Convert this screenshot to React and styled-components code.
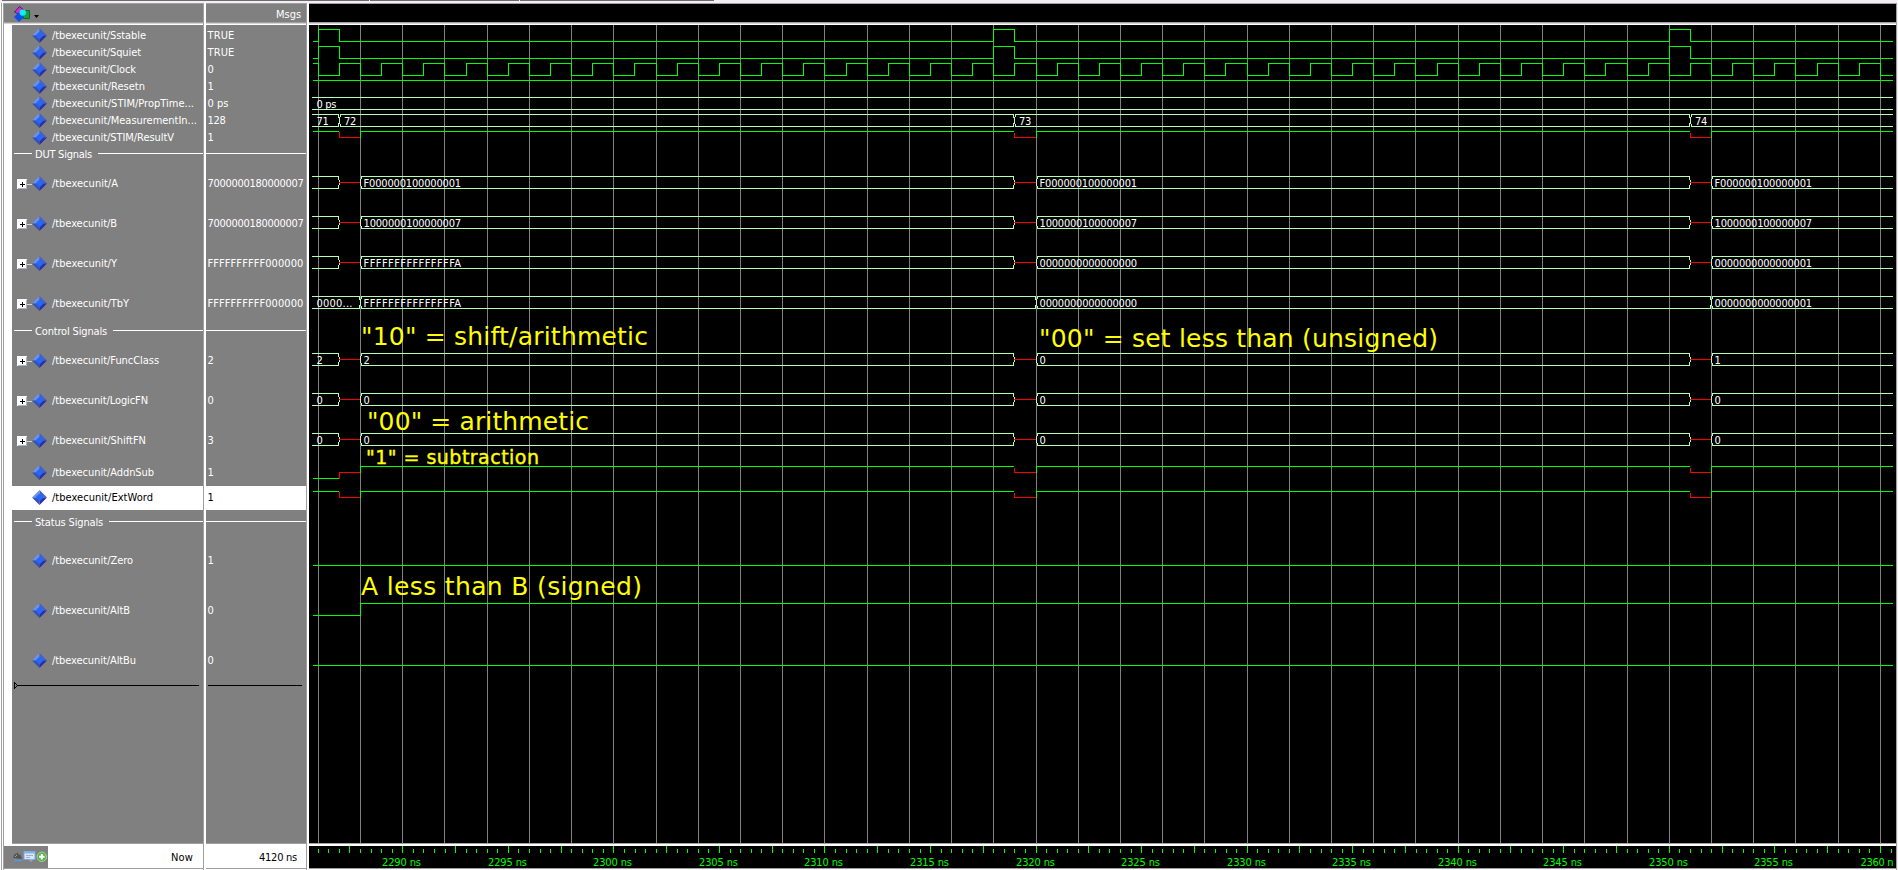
import React, { useLayoutEffect, useRef } from "react";
import styled, { createGlobalStyle } from "styled-components";

const UI_FONT = '"DejaVu Sans Condensed", "DejaVu Sans", sans-serif';
const GREEN = "#00ff00";
const BUS = "#b4ffb4";
const RED = "#ff0000";

const GlobalStyle = createGlobalStyle`
  * { box-sizing: border-box; }
  body { margin: 0; background: #fff; overflow: hidden; }
`;

const Window = styled.div`
  width: 1898px;
  height: 870px;
  display: flex;
  flex-direction: column;
  background: #fff;
  font: 11px/13px ${UI_FONT};
  color: #fff;
  overflow: hidden;
`;

const TopStrip = styled.div`
  height: 3px;
  flex: none;
  display: flex;
  gap: 1px;
  padding-left: 2px;
  background: #f1eff1;
`;

const StripSegment = styled.div`
  width: ${(p) => p.$width}px;
  height: 1px;
  background: #6e696e;
`;

const Workspace = styled.div`
  flex: 1;
  display: grid;
  grid-template-columns: 203px 103px 1587px 2px;
  margin-left: 1px;
  padding-left: 1px;
  border-left: 1px solid #a0a0a0;
`;

const Pane = styled.section`
  display: grid;
  grid-template-rows: 21px 821px 23px;
  min-width: 0;
  border-top: 1px solid #a0a0a0;
  border-left: ${(p) => (p.$first ? "1px solid #a0a0a0" : "0")};
  border-right: ${(p) => (p.$edge ? "0" : "1px solid #a0a0a0")};
  margin-right: ${(p) => (p.$edge ? "0" : "2px")};
`;

const PaneHead = styled.header`
  height: 21px;
  border-bottom: 1px solid #fff;
  box-shadow: inset 0 -1px #d4d4d4, inset 0 -2px #a0a0a0;
  background: ${(p) => (p.$dark ? "#000" : "#808080")};
  display: flex;
  align-items: center;
  justify-content: ${(p) => (p.$end ? "flex-end" : "flex-start")};
  padding: 0 ${(p) => (p.$end ? 5 : 0)}px 0 ${(p) => (p.$end || p.$dark ? 0 : 9)}px;
`;

const PaneBody = styled.div`
  height: 819px;
  background: ${(p) => (p.$dark ? "#000" : "#808080")};
  border-bottom: 1px solid #a0a0a0;
  padding-top: ${(p) => (p.$dark ? 0 : 2)}px;
  margin-left: ${(p) => (p.$gutter ? 8 : 0)}px;
`;

const PaneFoot = styled.footer`
  height: 23px;
  display: flex;
  align-items: center;
  justify-content: flex-end;
  padding-right: ${(p) => p.$pad || 0}px;
  color: #000;
  background: ${(p) => (p.$dark ? "#000" : "#fff")};
  border-bottom: 1px solid #a0a0a0;
`;

const FootTools = styled.div`
  width: 44px;
  height: 22px;
  margin-right: auto;
  background: #808080;
`;

const RightEdge = styled.div`
  border-left: 1px solid #a0a0a0;
  background: #f1eff1;
`;

const Row = styled.div`
  height: ${(p) => p.$height}px;
  display: flex;
  align-items: center;
  padding: ${(p) => (p.$height >= 40 ? 1 : 0)}px 0 ${(p) => (p.$selected ? 1 : 0)}px ${(p) => p.$indent || 0}px;
  border-top: ${(p) => (p.$selected ? "1px solid #808080" : "0")};
  color: ${(p) => (p.$selected ? "#000" : "#fff")};
  background: ${(p) => (p.$selected ? "#fff" : "transparent")};
`;

const Divider = styled.div`
  height: ${(p) => p.$height}px;
  display: flex;
  align-items: center;
  padding: 0 0 1px ${(p) => (p.$plain ? 0 : 2)}px;
`;

const Rule = styled.div`
  height: 1px;
  margin-bottom: 1px;
  background: #fff;
  flex: ${(p) => (p.$width ? `0 0 ${p.$width}px` : "1")};
`;

const DividerText = styled.span`
  padding: 1px 6px 0 3px;
`;

const Expander = styled.span`
  width: 15px;
  height: 13px;
  flex: none;
  padding-top: 2px;
  overflow: hidden;
  svg { display: block; }
`;

const NameText = styled.span`
  margin-left: 5px;
`;

const Fitted = styled.span`
  display: inline-block;
  white-space: pre;
`;

const EndMark = styled.div`
  height: 7px;
  margin: -3px 0 0 2px;
  svg { display: block; }
`;

/* Text tracked so that its advance equals the given width. */
function Fit({ width, children }) {
  const ref = useRef(null);
  useLayoutEffect(() => {
    const el = ref.current;
    el.style.letterSpacing = "0px";
    const natural = el.getBoundingClientRect().width;
    el.style.letterSpacing = `${(width - natural) / children.length}px`;
  }, [width, children]);
  return <Fitted ref={ref}>{children}</Fitted>;
}

const signals = [
  { name: "Sstable", w: 94, value: "TRUE", vw: 27, h: 17 },
  { name: "Squiet", w: 89, value: "TRUE", vw: 27, h: 17 },
  { name: "Clock", w: 84, value: "0", vw: 6, h: 17 },
  { name: "Resetn", w: 93, value: "1", vw: 6, h: 17 },
  { name: "STIM/PropTime...", w: 142, value: "0 ps", vw: 21, h: 17 },
  { name: "MeasurementIn...", w: 145, value: "128", vw: 18, h: 17 },
  { name: "STIM/ResultV", w: 122, value: "1", vw: 6, h: 17 },
  { divider: "DUT Signals", w: 57, h: 17 },
  { name: "A", w: 66, value: "7000000180000007", vw: 96, h: 40, bus: true },
  { name: "B", w: 65, value: "7000000180000007", vw: 96, h: 40, bus: true },
  { name: "Y", w: 65, value: "FFFFFFFFFF000000", vw: 96, h: 40, bus: true },
  { name: "TbY", w: 77, value: "FFFFFFFFFF000000", vw: 96, h: 40, bus: true },
  { divider: "Control Signals", w: 72, h: 17 },
  { name: "FuncClass", w: 107, value: "2", vw: 6, h: 40, bus: true },
  { name: "LogicFN", w: 96, value: "0", vw: 6, h: 40, bus: true },
  { name: "ShiftFN", w: 94, value: "3", vw: 6, h: 40, bus: true },
  { name: "AddnSub", w: 102, value: "1", vw: 6, h: 25 },
  { name: "ExtWord", w: 101, value: "1", vw: 6, h: 25, selected: true },
  { divider: "Status Signals", w: 68, h: 25 },
  { name: "Zero", w: 81, value: "1", vw: 6, h: 50 },
  { name: "AltB", w: 78, value: "0", vw: 6, h: 50 },
  { name: "AltBu", w: 84, value: "0", vw: 6, h: 50 },
];

const Diamond = () => (
  <svg width="15" height="15" viewBox="0 0 15 15">
    <path d="M7.5 0L0 7.5h7.5z" fill="#6a92ec" />
    <path d="M7.5 0L15 7.5H7.5z" fill="#4560c8" />
    <path d="M0 7.5h7.5V15z" fill="#3450b4" />
    <path d="M15 7.5H7.5V15z" fill="#2c2ca4" />
    <path d="M7.5 3.5l4 4-4 4-4-4z" fill="#2468fa" />
  </svg>
);

const PlusBox = () => (
  <svg width="16" height="11" viewBox="0 0 16 11" shapeRendering="crispEdges">
    <rect x="0" y="0" width="10" height="10" fill="#fff" />
    <path d="M9.5 1v9M1 9.5h9" stroke="#a9b4cc" />
    <path d="M3 5.5h5M5.5 3v5" stroke="#000" />
    <path d="M10 5.5h6" stroke="#d4d4d4" />
  </svg>
);

const ObjectsIcon = () => (
  <svg width="26" height="18" viewBox="13 5 26 18">
    <path d="M14.5 12l5-5.5 5 4-3 5z" fill="#c832dc" stroke="#3c0a46" strokeWidth="0.8" />
    <path d="M23 10.500h6.500v8H23z" fill="#14a03c" stroke="#0a5a28" strokeWidth="0.8" />
    <path d="M19 12l5 5-5 5-5-5z" fill="#0a50e6" />
    <circle cx="22.800" cy="12.600" r="3.200" fill="#14ebfa" />
    <path d="M34 15h5l-2.500 3z" fill="#000" />
  </svg>
);

const FootIcons = () => (
  <svg width="44" height="22" viewBox="4 846 44 22">
    <path d="M13 858l2-5 1 2 1-3 2 3 1-1 2 5z" fill="#505459" />
    <path d="M14 860.500h8" stroke="#5a96e1" strokeWidth="1.500" />
    <path d="M15 857l2-2" stroke="#a0a4a8" />
    <rect x="24" y="851.500" width="11" height="8" fill="#dce6f5" stroke="#7da5dc" />
    <path d="M24 852.500h11" stroke="#82b4f0" strokeWidth="2" />
    <path d="M26 855.500h7M26 857.500h4" stroke="#a0afc8" />
    <path d="M28 859l3 3 3-3z" fill="#82aae6" />
    <circle cx="41.800" cy="856.800" r="4.700" fill="#55b44b" stroke="#a0d796" />
    <path d="M39 856.800h5.600M41.800 854v5.600" stroke="#fff" strokeWidth="2" />
  </svg>
);

/* Time in ns to horizontal pixel. */
const tx = (t) => Math.floor(318.3 + (t - 2286) * 21.109);

const END = 1893;
const range = (from, to, step) => {
  const out = [];
  for (let v = from; v <= to + 1e-6; v += step) out.push(v);
  return out;
};

const pulse = (high, low) => {
  let d = `M313 ${low + 0.5}`;
  [2286, 2318, 2350].forEach((t) => {
    d += `H${tx(t) + 0.5}V${high + 0.5}H${tx(t + 1) + 0.5}V${low + 0.5}`;
  });
  return d + `H${END}`;
};

const clockPath = () => {
  let d = "M313 63.5";
  range(2286, 2360, 2).forEach((t) => {
    d += `H${tx(t) + 0.5}V75.5`;
    if (t < 2360) d += `H${tx(t + 1) + 0.5}V63.5`;
  });
  return d + `H${END}`;
};

const Line = ({ d, color = GREEN }) => <path d={d} fill="none" stroke={color} />;

const BusText = ({ x, top, children, width }) => (
  <text x={x} y={top + 11} fill="#fff" textLength={width || children.length * 6.09}>
    {children}
  </text>
);

const busEnd = (x, y) =>
  `M${x - 0.5} ${y}v4M${x + 0.5} ${y + 4}v2M${x + 0.5} ${y + 7}v2M${x - 0.5} ${y + 9}v4`;
const busStart = (x, y) =>
  `M${x + 1.5} ${y}v3M${x + 0.5} ${y + 3}v7M${x + 1.5} ${y + 10}v3`;

function Bus({ top, segments }) {
  return (
    <g>
      {segments.map(([from, to, label, width], i) => {
        const a = from ? tx(from) : 311;
        const b = to ? tx(to) : END;
        let d = `M${a + 1} ${top + 0.5}H${b}M${a + 1} ${top + 12.5}H${b}`;
        if (from) d += busStart(a, top);
        if (to) d += busEnd(b, top);
        const textX = from ? a + (from % 2 ? 5 : 3.6) : 316.5;
        return (
          <g key={i}>
            <Line d={d} color={BUS} />
            {label && (
              <BusText x={textX} top={top} width={width}>
                {label}
              </BusText>
            )}
          </g>
        );
      })}
    </g>
  );
}

const gaps = [2287, 2319, 2351];

const UnknownBus = ({ top, labels }) => (
  <g>
    <Line color={RED} d={gaps.map((t) => `M${tx(t)} ${top + 6.5}H${tx(t + 1)}`).join("")} />
    <Bus
      top={top}
      segments={[
        [null, 2287, labels[0]],
        [2288, 2319, labels[1]],
        [2320, 2351, labels[2]],
        [2352, null, labels[3]],
      ]}
    />
  </g>
);

const UnknownBit = ({ high, firstLow }) => {
  const mid = high + 6.5;
  const top = high + 0.5;
  const first = firstLow ? high + 12.5 : top;
  let green = `M313 ${first}H${tx(2287)}`;
  let red = "";
  gaps.forEach((t, i) => {
    const a = tx(t) + 0.5;
    const b = tx(t + 1);
    red += `M${a} ${i === 0 ? first : top + 1}V${mid}H${b}`;
    green += `M${b + 0.5} ${mid + 0.5}V${top}H${i < 2 ? tx(gaps[i + 1]) : END}`;
  });
  return (
    <g>
      <Line d={green} />
      <Line d={red} color={RED} />
    </g>
  );
};

const notes = [
  { x: 361, y: 345, size: 25, width: 287, text: '"10" = shift/arithmetic' },
  { x: 1039, y: 347, size: 25, width: 399, text: '"00" = set less than (unsigned)' },
  { x: 367, y: 430, size: 25, width: 222, text: '"00" = arithmetic' },
  { x: 366, y: 463.5, size: 19, width: 173, text: '"1" = subtraction', heavy: true },
  { x: 361, y: 595, size: 25, width: 281, text: "A less than B (signed)" },
];

const WaveSvg = styled.svg`
  display: block;
  flex: none;
  shape-rendering: crispEdges;
  font: 11px ${UI_FONT};
`;

const Note = styled.text`
  font-family: "DejaVu Sans", sans-serif;
  font-size: ${(p) => p.$size}px;
  fill: #ffff00;
  stroke: #ffff00;
  stroke-width: ${(p) => (p.$heavy ? 0.4 : 0)};
`;

const Waves = () => (
  <WaveSvg width="1587" height="818" viewBox="309 25 1587 818">
    <Line color="#808080" d={range(2286, 2360, 2).map((t) => `M${tx(t) + 0.5} 25V843`).join("")} />
    <Line d={pulse(29, 41)} />
    <Line d={pulse(46, 58)} />
    <Line d={clockPath()} />
    <Line d={`M313 80.5H${END}`} />
    <Bus top={97} segments={[[null, null, "0 ps", 20]]} />
    <Bus top={114} segments={[[null, 2287, "71"], [2287, 2319, "72"], [2319, 2351, "73"], [2351, null, "74"]]} />
    <UnknownBit high={131} />
    <UnknownBus top={176} labels={[null, "F000000100000001", "F000000100000001", "F000000100000001"]} />
    <UnknownBus top={216} labels={[null, "1000000100000007", "1000000100000007", "1000000100000007"]} />
    <UnknownBus top={256} labels={[null, "FFFFFFFFFFFFFFFA", "0000000000000000", "0000000000000001"]} />
    <Bus
      top={296}
      segments={[
        [null, 2288, "0000...", 36],
        [2288, 2320, "FFFFFFFFFFFFFFFA"],
        [2320, 2352, "0000000000000000"],
        [2352, null, "0000000000000001"],
      ]}
    />
    <UnknownBus top={353} labels={["2", "2", "0", "1"]} />
    <UnknownBus top={393} labels={["0", "0", "0", "0"]} />
    <UnknownBus top={433} labels={["0", "0", "0", "0"]} />
    <UnknownBit high={466} firstLow />
    <UnknownBit high={491} />
    <Line d={`M313 565.5H${END}`} />
    <Line d={`M313 615.5H${tx(2288) + 0.5}V603.5H${END}`} />
    <Line d={`M313 665.5H${END}`} />
    {notes.map((n) => (
      <Note key={n.text} x={n.x} y={n.y} $size={n.size} $heavy={n.heavy} textLength={n.width}>
        {n.text}
      </Note>
    ))}
  </WaveSvg>
);

const Timeline = () => (
  <WaveSvg width="1587" height="22" viewBox="309 846 1587 22">
    {range(2286, 2360.5, 0.5).map((t) => {
      const major = (t * 2) % 5 === 0;
      const x = major ? tx(t) : Math.floor(318.4 + (t - 2286) * 21.109);
      return <Line key={t} d={`M${x + 0.5} ${major ? 846 : 849}V853`} />;
    })}
    {range(2290, 2355, 5).map((t) => (
      <text key={t} x={tx(t) - 20} y="866" fill={GREEN} textLength="39">
        {t} ns
      </text>
    ))}
    <text x="1860.500" y="866" fill={GREEN} textLength="33">
      2360 n
    </text>
  </WaveSvg>
);

function NameRow({ s }) {
  if (s.divider)
    return (
      <Divider $height={s.h}>
        <Rule $width={18} />
        <DividerText><Fit width={s.w}>{s.divider}</Fit></DividerText>
        <Rule />
      </Divider>
    );
  return (
    <Row $height={s.h} $indent={5} $selected={s.selected}>
      <Expander>{s.bus && <PlusBox />}</Expander>
      <Diamond />
      <NameText><Fit width={s.w}>{`/tbexecunit/${s.name}`}</Fit></NameText>
    </Row>
  );
}

function ValueRow({ s }) {
  if (s.divider)
    return (
      <Divider $height={s.h} $plain>
        <Rule />
      </Divider>
    );
  return (
    <Row $height={s.h} $indent={1.5} $selected={s.selected}>
      <Fit width={s.vw}>{s.value}</Fit>
    </Row>
  );
}

export default function App() {
  return (
    <Window>
      <GlobalStyle />
      <TopStrip>
        <StripSegment $width={367} />
        <StripSegment $width={149} />
        <StripSegment $width={194} />
      </TopStrip>
      <Workspace>
        <Pane $first>
          <PaneHead><ObjectsIcon /></PaneHead>
          <PaneBody $gutter>
            {signals.map((s, i) => <NameRow key={i} s={s} />)}
            <EndMark>
              <svg width="185" height="7" viewBox="0 0 185 7" shapeRendering="crispEdges">
                <path d="M3 3.500H185M0.500 0v7M1 1.500h1M1 5.500h1M2 2.500h1M2 4.500h1" stroke="#000" />
              </svg>
            </EndMark>
          </PaneBody>
          <PaneFoot $pad={10}>
            <FootTools><FootIcons /></FootTools>
            <Fit width={22}>Now</Fit>
          </PaneFoot>
        </Pane>
        <Pane>
          <PaneHead $end><Fit width={25}>Msgs</Fit></PaneHead>
          <PaneBody>
            {signals.map((s, i) => <ValueRow key={i} s={s} />)}
            <EndMark>
              <svg width="94" height="7" viewBox="0 0 94 7" shapeRendering="crispEdges">
                <path d="M0 3.500H94" stroke="#000" />
              </svg>
            </EndMark>
          </PaneBody>
          <PaneFoot $pad={9}><Fit width={38}>4120 ns</Fit></PaneFoot>
        </Pane>
        <Pane $edge>
          <PaneHead $dark />
          <PaneBody $dark><Waves /></PaneBody>
          <PaneFoot $dark><Timeline /></PaneFoot>
        </Pane>
        <RightEdge />
      </Workspace>
    </Window>
  );
}
